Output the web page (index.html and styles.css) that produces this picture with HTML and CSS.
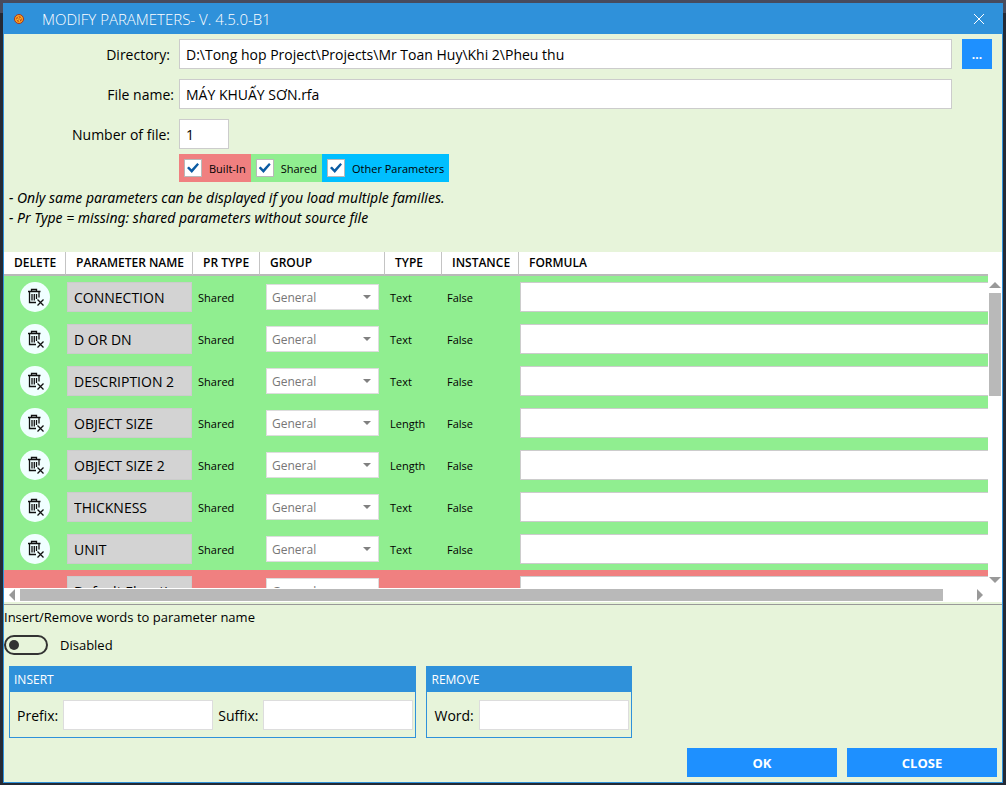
FILE: index.html
```html
<!DOCTYPE html>
<html lang="en">
<head>
  <meta charset="UTF-8" />
  <meta name="viewport" content="width=device-width, initial-scale=1.0" />
  <title>Modify Parameters</title>
  <link rel="stylesheet" href="styles.css">
</head>
<body>
  <!-- Shared icon -->
  <svg width="0" height="0" class="defs" aria-hidden="true">
    <symbol id="trash" viewBox="0 0 18 18">
      <g fill="none" stroke="#111" stroke-width="1.3">
        <path d="M2 3.5h12.5M5.5 3.5v-2h5v2M3.5 3.5v11h6.5M13 3.5v6M6 6v6.5M8.3 6v6.5M10.5 6v5" />
        <path d="M11.5 11.5l6 6M17.5 11.5l-6 6" />
      </g>
    </symbol>
  </svg>

  <div class="window">
    <header class="titlebar">
      <svg class="app-icon" width="10" height="10" viewBox="0 0 10 10" aria-hidden="true">
        <circle cx="5" cy="5" r="4.5" fill="#f5a623" stroke="#a8321c" />
        <circle cx="5" cy="5" r="2.2" fill="#ffc629" stroke="#c93a16" stroke-width="1.2" stroke-dasharray="2 1" />
        <circle cx="5" cy="5" r="0.7" fill="#b92e12" />
      </svg>
      <h1>MODIFY PARAMETERS- V. 4.5.0-B1</h1>
      <button class="close-x" aria-label="Close window">
        <svg width="10" height="10" viewBox="0 0 10 10"><path d="M0 0L10 10M10 0L0 10" stroke="#fff" /></svg>
      </button>
    </header>

    <section class="form">
      <label for="directory" class="inset">Directory:</label>
      <input id="directory" class="field" type="text" value="D:\Tong hop Project\Projects\Mr Toan Huy\Khi 2\Pheu thu">
      <button class="browse">...</button>

      <label for="filename">File name:</label>
      <input id="filename" class="field" type="text" value="MÁY KHUẤY SƠN.rfa">
      <span></span>

      <label for="count" class="inset">Number of file:</label>
      <input id="count" class="field short" type="text" value="1">
    </section>

    <div class="filters">
      <label class="built-in"><input type="checkbox" checked>Built-In</label>
      <label class="shared"><input type="checkbox" checked>Shared</label>
      <label class="other"><input type="checkbox" checked>Other Parameters</label>
    </div>

    <div class="notes">
      <p>- Only same parameters can be displayed if you load multiple families.</p>
      <p>- Pr Type = missing: shared parameters without source file</p>
    </div>

    <!-- Parameter grid -->
    <section class="grid">
      <div class="viewport">
        <table>
          <colgroup>
            <col class="c-delete"><col class="c-name"><col class="c-pr"><col class="c-group"><col class="c-type"><col class="c-instance"><col>
          </colgroup>
          <thead>
            <tr>
              <th>DELETE</th>
              <th>PARAMETER NAME</th>
              <th>PR TYPE</th>
              <th>GROUP</th>
              <th>TYPE</th>
              <th>INSTANCE</th>
              <th>FORMULA</th>
            </tr>
          </thead>
          <tbody>
            <tr class="shared">
              <td><button class="delete" aria-label="Delete"><svg><use href="#trash" /></svg></button></td>
              <td><input class="name" aria-label="Parameter name" value="CONNECTION"></td>
              <td>Shared</td>
              <td><div class="pick"><select aria-label="Group"><option>General</option></select></div></td>
              <td>Text</td>
              <td>False</td>
              <td><input class="formula" aria-label="Formula"></td>
            </tr>
            <tr class="shared">
              <td><button class="delete" aria-label="Delete"><svg><use href="#trash" /></svg></button></td>
              <td><input class="name" aria-label="Parameter name" value="D OR DN"></td>
              <td>Shared</td>
              <td><div class="pick"><select aria-label="Group"><option>General</option></select></div></td>
              <td>Text</td>
              <td>False</td>
              <td><input class="formula" aria-label="Formula"></td>
            </tr>
            <tr class="shared">
              <td><button class="delete" aria-label="Delete"><svg><use href="#trash" /></svg></button></td>
              <td><input class="name" aria-label="Parameter name" value="DESCRIPTION 2"></td>
              <td>Shared</td>
              <td><div class="pick"><select aria-label="Group"><option>General</option></select></div></td>
              <td>Text</td>
              <td>False</td>
              <td><input class="formula" aria-label="Formula"></td>
            </tr>
            <tr class="shared">
              <td><button class="delete" aria-label="Delete"><svg><use href="#trash" /></svg></button></td>
              <td><input class="name" aria-label="Parameter name" value="OBJECT SIZE"></td>
              <td>Shared</td>
              <td><div class="pick"><select aria-label="Group"><option>General</option></select></div></td>
              <td>Length</td>
              <td>False</td>
              <td><input class="formula" aria-label="Formula"></td>
            </tr>
            <tr class="shared">
              <td><button class="delete" aria-label="Delete"><svg><use href="#trash" /></svg></button></td>
              <td><input class="name" aria-label="Parameter name" value="OBJECT SIZE 2"></td>
              <td>Shared</td>
              <td><div class="pick"><select aria-label="Group"><option>General</option></select></div></td>
              <td>Length</td>
              <td>False</td>
              <td><input class="formula" aria-label="Formula"></td>
            </tr>
            <tr class="shared">
              <td><button class="delete" aria-label="Delete"><svg><use href="#trash" /></svg></button></td>
              <td><input class="name" aria-label="Parameter name" value="THICKNESS"></td>
              <td>Shared</td>
              <td><div class="pick"><select aria-label="Group"><option>General</option></select></div></td>
              <td>Text</td>
              <td>False</td>
              <td><input class="formula" aria-label="Formula"></td>
            </tr>
            <tr class="shared">
              <td><button class="delete" aria-label="Delete"><svg><use href="#trash" /></svg></button></td>
              <td><input class="name" aria-label="Parameter name" value="UNIT"></td>
              <td>Shared</td>
              <td><div class="pick"><select aria-label="Group"><option>General</option></select></div></td>
              <td>Text</td>
              <td>False</td>
              <td><input class="formula" aria-label="Formula"></td>
            </tr>
            <tr class="built-in">
              <td></td>
              <td><input class="name" aria-label="Parameter name" value="Default Elevation"></td>
              <td>Built-In</td>
              <td><div class="pick"><select aria-label="Group"><option>General</option></select></div></td>
              <td>Length</td>
              <td>False</td>
              <td><input class="formula" aria-label="Formula"></td>
            </tr>
          </tbody>
        </table>
      </div>
      <div class="vscroll">
        <i class="arrow up"></i>
        <div class="vtrack"><div class="thumb"></div></div>
        <i class="arrow down"></i>
      </div>
      <div class="hscroll">
        <i class="arrow left"></i>
        <div class="htrack"><div class="thumb"></div></div>
        <i class="arrow right"></i>
      </div>
    </section>

    <section class="words">
      <p>Insert/Remove words to parameter name</p>
      <label class="switch"><input type="checkbox">Disabled</label>
      <div class="groups">
        <fieldset class="group">
          <div class="group-title">INSERT</div>
          <div class="group-body">
            <label for="prefix">Prefix:</label>
            <input id="prefix" type="text">
            <label for="suffix">Suffix:</label>
            <input id="suffix" type="text">
          </div>
        </fieldset>
        <fieldset class="group">
          <div class="group-title">REMOVE</div>
          <div class="group-body">
            <label for="word">Word:</label>
            <input id="word" type="text">
          </div>
        </fieldset>
      </div>
    </section>

    <footer class="actions">
      <button>OK</button>
      <button>CLOSE</button>
    </footer>
  </div>
</body>
</html>
```
FILE: styles.css
```css
/* Basic Reset */
* { margin: 0; padding: 0; box-sizing: border-box; }
body {
  height: 100vh;
  padding: 3px 3px 2px;
  font-family: 'Segoe UI', 'Open Sans', 'Noto Sans', sans-serif;
  font-size: 14px;
  color: #000;
  background: linear-gradient(#474b5e 13px, #242a35 13px);
}
button, input, select {
  font: inherit;
  color: inherit;
  border: none;
  border-radius: 0;
  outline: none;
}
input { min-width: 0; }
.defs { position: absolute; }
.window {
  display: flex;
  flex-direction: column;
  height: 100%;
  border: 1px solid #2f91da;
  border-top: none;
  background: #e7f4da;
}

/* Title bar */
.titlebar {
  display: flex;
  align-items: center;
  height: 31px;
  padding: 0 18px 0 10px;
  background: #2f91da;
  color: #fff;
}
.titlebar h1 {
  flex: 1;
  margin-left: 18px;
  font-size: 15px;
  font-weight: 300;
}
.close-x {
  display: flex;
  background: none;
}

/* Form */
.form {
  display: grid;
  grid-template-columns: 170px 1fr 30px;
  column-gap: 10px;
  row-gap: 10px;
  align-items: center;
  padding: 5px 10px 5px 0;
}
.form label {
  text-align: right;
}
.form label.inset { padding-right: 4px; }
.field {
  height: 30px;
  margin-left: -5px;
  padding: 0 6px;
  border: 1px solid #ccc;
  background: #fff;
}
.field.short { width: 50px; }
.browse {
  height: 30px;
  background: #1e90ff;
  color: #fff;
  font-size: 12px;
  font-weight: 700;
}

.filters {
  display: flex;
  padding-left: 175px;
  font-size: 11px;
}
.filters label {
  display: flex;
  align-items: center;
  gap: 7px;
  height: 28px;
  padding: 0 5px;
}
.filters input {
  appearance: none;
  width: 18px;
  height: 18px;
  border: 1px solid #b9b9b9;
  background: #fff;
}
.filters input:checked::before {
  content: '';
  display: block;
  width: 12px;
  height: 10px;
  margin: 3px 2px;
  background: #0a5ba3;
  clip-path: polygon(0 50%, 16% 35%, 38% 62%, 86% 0, 100% 14%, 40% 100%);
}
.built-in { background: #f08080; }
.shared { background: #90ee90; }
.other { background: #00bfff; }

.notes {
  padding: 6px 5px 24px;
  font-family: 'Segoe UI', 'Noto Sans', sans-serif;
  font-style: italic;
  line-height: 20px;
}

/* Parameter grid */
.grid {
  display: grid;
  flex: 1;
  grid-template-columns: minmax(0, 1fr) 14px;
  grid-template-rows: minmax(0, 1fr) 14px;
  min-height: 0;
  background: #fff;
}
.viewport { overflow: hidden; }
table {
  width: 100%;
  table-layout: fixed;
  border-collapse: separate;
  border-spacing: 0;
  font-size: 11px;
}
.c-delete { width: 62px; }
.c-name { width: 127px; }
.c-pr { width: 67px; }
.c-group { width: 125px; }
.c-type { width: 57px; }
.c-instance { width: 77px; }
th {
  height: 24px;
  padding-left: 10px;
  border-right: 1px solid #c4c4c4;
  border-bottom: 2px solid #b9b9b9;
  text-align: left;
  font-size: 12px;
  font-weight: 600;
  line-height: 22px;
  white-space: nowrap;
}
th:last-child { border-right: none; }
td {
  height: 42px;
  padding-left: 5px;
}
td:nth-child(1) { padding-left: 16px; }
td:nth-child(2) { padding: 0 0 0 1px; }
td:nth-child(4) { padding-left: 6px; }
td:nth-child(7) { padding-left: 1px; }
.delete {
  display: grid;
  place-items: center;
  width: 30px;
  height: 30px;
  border-radius: 50%;
  background: #f0ffff;
}
.delete svg {
  width: 18px;
  height: 18px;
}
.name,
.formula {
  display: block;
  width: 100%;
  height: 30px;
  padding: 0 6px;
  border: 1px solid #ccc;
  background: #fff;
  font-size: 14px;
}
.name {
  width: 125px;
  background: #d3d3d3;
}
.formula { border-right: none; }
.pick {
  position: relative;
  width: 113px;
}
.pick::after {
  content: '';
  position: absolute;
  top: 11px;
  right: 8px;
  border: 4px solid transparent;
  border-top-color: #808080;
  border-bottom: none;
}
.pick select {
  display: block;
  appearance: none;
  width: 100%;
  height: 26px;
  padding: 0 5px;
  border: 1px solid #ddd;
  background: #fff;
  color: #777;
  font-size: 12px;
}

/* Scroll bars */
.vscroll {
  display: flex;
  flex-direction: column;
  align-items: center;
  padding: 30px 0 5px;
}
.vtrack {
  flex: 1;
  margin: 5px 0;
}
.vtrack .thumb {
  width: 12px;
  height: 37%;
}
.hscroll {
  display: flex;
  align-items: center;
  padding: 0 5px;
}
.htrack {
  flex: 1;
  margin: 0 5px;
}
.htrack .thumb {
  width: 97%;
  height: 12px;
}
.thumb { background: #b9b9b9; }
.arrow { border: 6px solid transparent; }
.up { border-bottom-color: #999; border-top: none; }
.down { border-top-color: #999; border-bottom: none; }
.left { border-right-color: #999; border-left: none; }
.right { border-left-color: #999; border-right: none; }

/* Insert / remove */
.words {
  margin-top: 2px;
  border-top: 1px solid #999;
  font-size: 13px;
}
.words p {
  line-height: 24px;
}
.switch {
  display: flex;
  align-items: center;
  gap: 12px;
  margin-top: 6px;
}
.switch input {
  appearance: none;
  width: 44px;
  height: 20px;
  padding: 3px;
  border: 2px solid #333;
  border-radius: 10px;
}
.switch input::before {
  content: '';
  display: block;
  width: 10px;
  height: 10px;
  border-radius: 50%;
  background: #333;
}
.groups {
  display: flex;
  gap: 10px;
  padding: 11px 5px 10px;
}
.group {
  border: 1px solid #2f91da;
}
.group-title {
  padding-left: 4px;
  background: #2f91da;
  color: #fff;
  font-size: 12px;
  line-height: 25px;
}
.group-body {
  display: flex;
  align-items: center;
  gap: 5px;
  padding: 8px 2px 7px 7px;
  font-size: 14px;
}
.group-body input {
  width: 150px;
  height: 30px;
  padding: 0 6px;
  border: 1px solid #ddd;
  background: #fff;
}

.actions {
  display: flex;
  justify-content: flex-end;
  gap: 10px;
  padding: 0 5px 5px;
}
.actions button {
  width: 150px;
  height: 29px;
  background: #1e90ff;
  color: #fff;
  font-size: 13px;
  font-weight: 700;
}
```
